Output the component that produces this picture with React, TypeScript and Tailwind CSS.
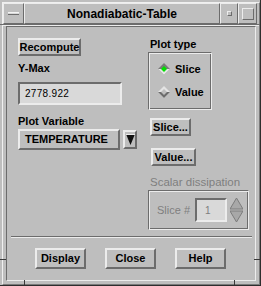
import React from "react";

const raised =
  "border-2 border-t-[#ececec] border-l-[#ececec] border-r-[#6c6c6c] border-b-[#6c6c6c]";
const raised1 =
  "border border-t-[#ececec] border-l-[#ececec] border-r-[#6c6c6c] border-b-[#6c6c6c]";
const sunken =
  "border-2 border-t-[#6c6c6c] border-l-[#6c6c6c] border-r-[#ececec] border-b-[#ececec]";
const etched =
  "border border-t-[#6c6c6c] border-l-[#6c6c6c] border-r-[#ececec] border-b-[#ececec] shadow-[inset_1px_1px_0_#ececec,inset_-1px_-1px_0_#6c6c6c]";

const Btn = ({ label, w, h = 18 }: { label: string; w: number; h?: number }) => (
  <div
    className={`${raised} flex items-center justify-center font-bold text-[11px] leading-none text-black`}
    style={{ width: w, height: h }}
  >
    {label}
  </div>
);

const Diamond = ({ on }: { on: boolean }) => (
  <svg width="12" height="12" viewBox="0 0 12 12">
    <polygon points="6,0 12,6 6,12 0,6" fill={on ? "#7a7a7a" : "#e4e4e4"} />
    <polygon points="6,12 12,6 0,6" fill={on ? "#e4e4e4" : "#6c6c6c"} />
    <polygon points="6,3 9,6 6,9 3,6" fill={on ? "#00e000" : "#bebebe"} />
  </svg>
);

const Spin = () => (
  <svg width="13" height="25" viewBox="0 0 13 25">
    <polygon points="6.5,0 13,11 0,11" fill="#a8a8a8" stroke="#7c7c7c" />
    <polygon points="0,13 13,13 6.5,24" fill="#a8a8a8" stroke="#7c7c7c" />
  </svg>
);

export default function App() {
  return (
    <div className="w-[261px] h-[286px] bg-[#bebebe] font-['Liberation_Sans',Arial,sans-serif] text-black flex flex-col border-r border-b border-[#2e2e2e] pt-[2px] pl-[2px] relative overflow-hidden">
      {/* frame resize ticks */}
      <span className="absolute left-0 top-[24px] w-[3px] h-[1px] bg-[#6c6c6c]" />
      <span className="absolute right-0 top-[24px] w-[6px] h-[1px] bg-[#6c6c6c]" />
      <span className="absolute left-0 bottom-[25px] w-[6px] h-[1px] bg-[#3a3a3a]" />
      <span className="absolute right-0 bottom-[25px] w-[6px] h-[1px] bg-[#3a3a3a]" />
      <span className="absolute left-[24px] bottom-0 w-[1px] h-[5px] bg-[#3a3a3a]" />
      <span className="absolute right-[25px] bottom-0 w-[1px] h-[5px] bg-[#3a3a3a]" />
      <div className="flex-1 flex flex-col border-t border-l border-[#f0f0f0] border-r border-b border-r-[#7a7a7a] border-b-[#7a7a7a]">
        {/* title bar */}
        <div className="h-[21px] flex">
          <div className={`${raised1} w-[21px] flex items-center justify-center`}>
            <div className="w-[11px] h-[3px] bg-[#d8d8d8] border-t border-[#f4f4f4] border-b border-b-[#6c6c6c]" />
          </div>
          <div className={`${raised1} flex-1 flex items-center justify-center font-bold text-[12px]`}>
            Nonadiabatic-Table
          </div>
          <div className={`${raised1} w-[18px] flex items-center justify-center`}>
            <div className={`${raised1} w-[5px] h-[5px]`} />
          </div>
          <div className={`${raised1} w-[19px] flex items-center justify-center`}>
            <div className={`${raised1} w-[12px] h-[12px]`} />
          </div>
          <div className="w-[2px]" />
        </div>
        <div className="h-[2px] border-t border-[#6c6c6c] border-b border-b-[#ececec]" />
        {/* client */}
        <div className="flex-1 mx-[3px] mb-[3px] border-t border-l border-[#6c6c6c] border-r border-b border-r-[#ececec] border-b-[#ececec] flex flex-col">
          <div className="h-[209px] flex">
            {/* left column */}
            <div className="w-[130px] pl-[11px] pt-[11px] flex flex-col">
              <Btn label="Recompute" w={63} />
              <div className="mt-[5px] font-bold text-[11px] leading-[14px]">Y-Max</div>
              <div className={`${sunken} mt-[7px] w-[104px] h-[23px] bg-[#d9d9d9] flex items-center pl-[5px] text-[10px] tracking-[0.3px]`}>
                2778.922
              </div>
              <div className="mt-[9px] font-bold text-[11px] leading-[14px]">Plot Variable</div>
              <div className="mt-[1px] flex items-center gap-[3px]">
                <div className={`${raised} w-[102px] h-[21px] flex items-center pl-[5px] font-bold text-[11px]`}>
                  TEMPERATURE
                </div>
                <div className={`${raised} w-[14px] h-[19px] flex items-center justify-center`}>
                  <svg width="9" height="11" viewBox="0 0 9 11">
                    <polygon points="0,0 9,0 4.5,11" fill="#111" />
                    <line x1="0" y1="0.5" x2="9" y2="0.5" stroke="#ececec" />
                  </svg>
                </div>
              </div>
            </div>
            {/* right column */}
            <div className="w-[104px] pl-[11px] pt-[10px] flex flex-col">
              <div className="ml-[2px] font-bold text-[11px] leading-[14px]">Plot type</div>
              <div className={`${etched} mt-[1px] w-[64px] h-[58px] flex flex-col pl-[9px] pt-[10px] gap-[11px]`}>
                <div className="flex items-center gap-[5px] font-bold text-[11px] leading-[12px]">
                  <Diamond on />
                  Slice
                </div>
                <div className="flex items-center gap-[5px] font-bold text-[11px] leading-[12px]">
                  <Diamond on={false} />
                  Value
                </div>
              </div>
              <div className="mt-[8px] ml-[2px]">
                <Btn label="Slice..." w={41} />
              </div>
              <div className="mt-[12px] ml-[3px]">
                <Btn label="Value..." w={45} />
              </div>
              <div className="mt-[9px] ml-[2px] whitespace-nowrap text-[11.5px] leading-[14px] text-[#7e7e7e]">
                Scalar dissipation
              </div>
              <div className={`${etched} mt-[1px] w-[101px] h-[40px] flex items-center pl-[8px]`}>
                <span className="text-[11px] text-[#7e7e7e] mr-[5px] whitespace-nowrap">Slice #</span>
                <div className={`${sunken} w-[32px] h-[24px] bg-[#d9d9d9] flex items-center pl-[8px] text-[10px] text-[#7e7e7e]`}>
                  1
                </div>
                <div className="ml-[3px] flex">
                  <Spin />
                </div>
              </div>
            </div>
          </div>
          {/* separator */}
          <div className="ml-[4px] mr-[3px] h-[2px] border-t border-[#6c6c6c] border-b border-b-[#ececec]" />
          <div className="mt-[10px] flex pl-[28px] gap-[19px]">
            <Btn label="Display" w={51} h={21} />
            <Btn label="Close" w={51} h={21} />
            <Btn label="Help" w={51} h={21} />
          </div>
        </div>
      </div>
    </div>
  );
}
